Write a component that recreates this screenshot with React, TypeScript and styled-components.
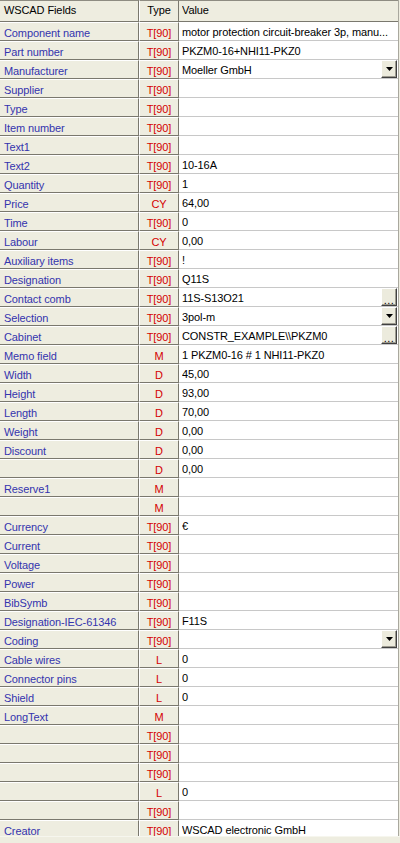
import React from "react";
import styled, { createGlobalStyle } from "styled-components";

const GlobalStyle = createGlobalStyle`
  html, body {
    margin: 0;
    padding: 0;
    background: #eeede0;
  }
  body {
    font-family: Tahoma, "Liberation Sans", Arial, sans-serif;
    font-size: 11px;
    letter-spacing: -0.1px;
  }
`;

const Page = styled.div`
  width: 400px;
  height: 843px;
  display: flex;
  flex-direction: column;
  background: #eeede0;
`;

const Grid = styled.div`
  width: 398px;
  height: 836px;
  overflow: hidden;
  border-right: 1px solid #a9a89e;
  background: #fff;
`;

const Row = styled.div<{ $header?: boolean }>`
  display: grid;
  grid-template-columns: 139px 40px 1fr;
  height: ${p => (p.$header ? 22 : 19)}px;
`;

const cellPad = (header?: boolean) => (header ? "padding-bottom: 2px;" : "padding-top: 2px;");

const NameCell = styled.div<{ $header?: boolean }>`
  display: flex;
  align-items: center;
  box-sizing: border-box;
  padding-left: 4px;
  ${p => cellPad(p.$header)}
  background: #eeede0;
  color: ${p => (p.$header ? "#000" : "#3434ae")};
  border-top: 1px solid ${p => (p.$header ? "#8e8c82" : "#fff")};
  border-bottom: 1px solid #7a786e;
  border-right: 1px solid #7a786e;
  white-space: nowrap;
  overflow: hidden;
`;

const TypeCell = styled.div<{ $header?: boolean }>`
  display: flex;
  align-items: center;
  justify-content: center;
  box-sizing: border-box;
  ${p => cellPad(p.$header)}
  background: #eeede0;
  color: ${p => (p.$header ? "#000" : "#d40000")};
  border-top: 1px solid ${p => (p.$header ? "#8e8c82" : "#fff")};
  border-left: 1px solid #fff;
  border-bottom: 1px solid #7a786e;
  border-right: 1px solid #7a786e;
`;

const ValueCell = styled.div<{ $header?: boolean }>`
  display: flex;
  align-items: center;
  box-sizing: border-box;
  min-width: 0;
  padding-left: 3px;
  background: ${p => (p.$header ? "#eeede0" : "#fff")};
  color: #000;
  border-top: ${p => (p.$header ? "1px solid #8e8c82" : "none")};
  border-bottom: 1px solid ${p => (p.$header ? "#7a786e" : "#c8c8c8")};
`;

const ValueText = styled.span<{ $header?: boolean }>`
  flex: 1;
  min-width: 0;
  white-space: nowrap;
  overflow: hidden;
  ${p => cellPad(p.$header)}
`;

const EditButton = styled.div`
  width: 16px;
  height: 18px;
  box-sizing: border-box;
  flex: none;
  display: flex;
  align-items: center;
  justify-content: center;
  background: #ecebdd;
  border: 1px solid;
  border-color: #fff #404040 #404040 #fff;
  box-shadow: inset -1px -1px 0 #9d9b90;
  margin-right: 1px;
  align-self: flex-start;
  color: #000;
  font-size: 11px;
  line-height: 1;
`;

const Dots = styled.span`
  margin-top: 6px;
  letter-spacing: 0.5px;
`;

const Footer = styled.div`
  flex: 1;
  background: #eeede0;
  border-top: 1px solid #f6f6ee;
`;

type Control = "list" | "more" | undefined;

const rows: [string, string, string, Control?][] = [
  ["Component name", "T[90]", "motor protection circuit-breaker 3p, manu..."],
  ["Part number", "T[90]", "PKZM0-16+NHI11-PKZ0"],
  ["Manufacturer", "T[90]", "Moeller GmbH", "list"],
  ["Supplier", "T[90]", ""],
  ["Type", "T[90]", ""],
  ["Item number", "T[90]", ""],
  ["Text1", "T[90]", ""],
  ["Text2", "T[90]", "10-16A"],
  ["Quantity", "T[90]", "1"],
  ["Price", "CY", "64,00"],
  ["Time", "T[90]", "0"],
  ["Labour", "CY", "0,00"],
  ["Auxiliary items", "T[90]", "!"],
  ["Designation", "T[90]", "Q11S"],
  ["Contact comb", "T[90]", "11S-S13O21", "more"],
  ["Selection", "T[90]", "3pol-m", "list"],
  ["Cabinet", "T[90]", "CONSTR_EXAMPLE\\\\PKZM0", "more"],
  ["Memo field", "M", "1 PKZM0-16 # 1 NHI11-PKZ0"],
  ["Width", "D", "45,00"],
  ["Height", "D", "93,00"],
  ["Length", "D", "70,00"],
  ["Weight", "D", "0,00"],
  ["Discount", "D", "0,00"],
  ["", "D", "0,00"],
  ["Reserve1", "M", ""],
  ["", "M", ""],
  ["Currency", "T[90]", "€"],
  ["Current", "T[90]", ""],
  ["Voltage", "T[90]", ""],
  ["Power", "T[90]", ""],
  ["BibSymb", "T[90]", ""],
  ["Designation-IEC-61346", "T[90]", "F11S"],
  ["Coding", "T[90]", "", "list"],
  ["Cable wires", "L", "0"],
  ["Connector pins", "L", "0"],
  ["Shield", "L", "0"],
  ["LongText", "M", ""],
  ["", "T[90]", ""],
  ["", "T[90]", ""],
  ["", "T[90]", ""],
  ["", "L", "0"],
  ["", "T[90]", ""],
  ["Creator", "T[90]", "WSCAD electronic GmbH"],
];

function ArrowDown() {
  return (
    <svg width="7" height="4" viewBox="0 0 7 4">
      <path d="M0 0h7L3.5 4z" fill="#000" />
    </svg>
  );
}

function FieldRow({ name, type, value, control }: { name: string; type: string; value: string; control?: Control }) {
  return (
    <Row>
      <NameCell>{name}</NameCell>
      <TypeCell>{type}</TypeCell>
      <ValueCell>
        <ValueText>{value}</ValueText>
        {control === "list" && (
          <EditButton>
            <ArrowDown />
          </EditButton>
        )}
        {control === "more" && (
          <EditButton>
            <Dots>...</Dots>
          </EditButton>
        )}
      </ValueCell>
    </Row>
  );
}

export default function App() {
  return (
    <Page>
      <GlobalStyle />
      <Grid>
        <Row $header>
          <NameCell $header>WSCAD Fields</NameCell>
          <TypeCell $header>Type</TypeCell>
          <ValueCell $header>
            <ValueText $header>Value</ValueText>
          </ValueCell>
        </Row>
        {rows.map(([name, type, value, control], i) => (
          <FieldRow key={i} name={name} type={type} value={value} control={control} />
        ))}
      </Grid>
      <Footer />
    </Page>
  );
}
